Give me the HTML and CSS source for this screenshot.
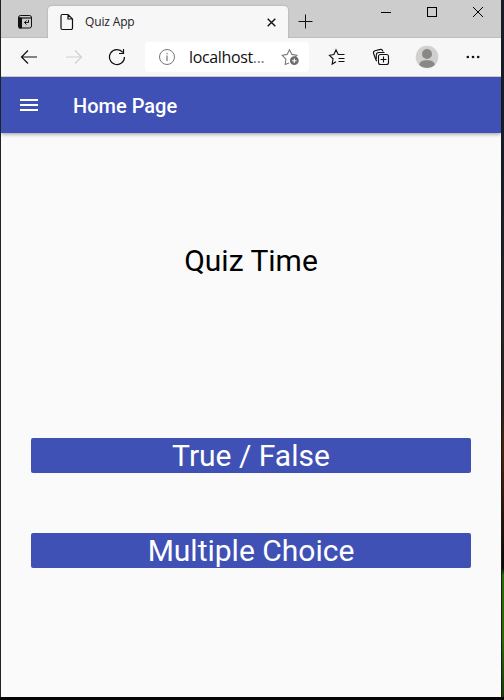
FILE: index.html
```html
<!DOCTYPE html>
<html lang="en">
<head>
<meta charset="utf-8">
<title>Quiz App</title>
<link rel="stylesheet" href="styles.css">
</head>
<body>
<div class="window">
  <header class="titlebar">
    <svg class="tab-actions" width="16" height="16" viewBox="0 0 16 16" fill="none" stroke="#111"><rect x="1.500" y="1.500" width="13" height="12.500" rx="2"/><path d="M1 4h14" stroke-width="1.200"/><path d="M2 4h2.500v10H2z" fill="#111"/><path d="M11.500 6v2.500h-4M9.500 6.500l-2 2 2 2"/></svg>
    <div class="tab">
      <svg class="page-icon" width="14" height="18" viewBox="0 0 14 18" fill="none" stroke="#111" stroke-width="1.200"><path d="M2.500 1.500h5.500l4.500 4.500v9a1.500 1.500 0 0 1-1.500 1.500H2.500A1.500 1.500 0 0 1 1 15V3A1.500 1.500 0 0 1 2.500 1.500zM8 1.500V6h4.500"/></svg>
      <span class="tab-title">Quiz App</span>
      <svg class="tab-close" width="9" height="9" viewBox="0 0 9 9" stroke="#111" stroke-width="1.400"><path d="M.7.7l7.600 7.600M8.300.7L.7 8.300"/></svg>
    </div>
    <svg class="new-tab" width="15" height="15" viewBox="0 0 15 15" stroke="#111" stroke-width="1"><path d="M.5 7.500h14M7.500 .5v14"/></svg>
    <div class="controls">
      <svg width="12" height="12" viewBox="0 0 12 12" stroke="#000"><path d="M1 6.500h10"/></svg>
      <svg width="12" height="12" viewBox="0 0 12 12" stroke="#000" fill="none"><rect x="1.500" y="1.500" width="9" height="9"/></svg>
      <svg width="12" height="12" viewBox="0 0 12 12" stroke="#000"><path d="M1 1l10 10M11 1L1 11"/></svg>
    </div>
  </header>
  <nav class="toolbar">
    <svg class="back" width="18" height="16" viewBox="0 0 18 16" fill="none" stroke="#111" stroke-width="1.200"><path d="M17 8H1.500M8 1.500L1.500 8 8 14.500"/></svg>
    <svg class="forward" width="18" height="16" viewBox="0 0 18 16" fill="none" stroke="#d0d0d0" stroke-width="1.200"><path d="M1 8h15.500M10 1.500L16.500 8 10 14.500"/></svg>
    <svg class="reload" width="18" height="18" viewBox="0 0 18 18" fill="none" stroke="#111" stroke-width="1.200"><path d="M16.500 9A7.500 7.500 0 1 1 14.800 4.300M15.500 1v4.500H11"/></svg>
    <div class="address">
      <svg class="info" width="18" height="18" viewBox="0 0 18 18" fill="none" stroke="#777"><circle cx="9" cy="9" r="7.500"/><path d="M9 7.500v5.500M9 5v1.300" stroke-width="1.200"/></svg>
      <span class="url">localhost<span class="dots">...</span></span>
      <svg class="favorite" width="18" height="18" viewBox="0 0 18 18" fill="none" stroke="#777" stroke-width="1.100"><path d="M8 15l-3.800 1.500.7-5.300L1.200 7.300l4.900-.9L8.500 1.700l2.400 4.700 4.900.9-2 2"/><circle cx="13.300" cy="12.700" r="4.400" fill="#6c6c6c" stroke="none"/><path d="M13.300 10.400v4.600M11 12.700h4.600" stroke="#fff"/></svg>
    </div>
    <svg class="favorites" width="18" height="18" viewBox="0 0 18 18" fill="none" stroke="#111" stroke-width="1.150"><path d="M8 13.700L4.200 16l.8-5.200L1.500 7.300l4.400-.8L8 1.800l2.200 4.700h6.300M10.500 10.500h6M10.500 13.500h6"/></svg>
    <svg class="collections" width="18" height="18" viewBox="0 0 18 18" fill="none" stroke="#111" stroke-width="1.100"><path d="M5 13C4.200 12.700 3.900 12 3.600 11L1.500 5.300C1.200 4 1.700 3.200 3 2.800L8.500 1.400C10 1.100 10.700 2 11 3.500M4.300 11V7Q4.300 4.500 6.800 4.500H12.500"/><rect x="6.500" y="6.500" width="10" height="10" rx="2"/><path d="M11.500 8.500v6M8.500 11.500h6"/></svg>
    <svg class="avatar" width="24" height="24" viewBox="0 0 24 24"><circle cx="12" cy="12" r="11.300" fill="#d2d0ce"/><circle cx="12" cy="9" r="5" fill="#8a8886"/><path d="M4.200 20C4.500 16.500 7.500 15.300 12 15.300s7.500 1.200 7.800 4.700A11.300 11.300 0 0 1 4.200 20z" fill="#8a8886"/></svg>
    <svg class="more" width="14" height="4" viewBox="0 0 14 4" fill="#111"><circle cx="1.800" cy="2" r="1.300"/><circle cx="7" cy="2" r="1.300"/><circle cx="12.200" cy="2" r="1.300"/></svg>
  </nav>
  <div class="appbar">
    <svg class="menu" width="18" height="12" viewBox="0 0 18 12" fill="#fff"><path d="M0 0h18v2H0zM0 5h18v2H0zM0 10h18v2H0z"/></svg>
    <span class="page-title">Home Page</span>
  </div>
  <main class="content">
    <h1 class="heading">Quiz Time</h1>
    <button class="choice">True / False</button>
    <button class="choice">Multiple Choice</button>
  </main>
</div>
</body>
</html>
```
FILE: styles.css
```css
* { box-sizing: border-box; }
body {
  margin: 0;
  width: 504px;
  height: 700px;
  padding: 0 3px 3px 1px;
  overflow: hidden;
  background:
    linear-gradient(#050505, #050505) 0 697px / 504px 3px no-repeat,
    linear-gradient(#222, #222) 0 0 / 1px 697px no-repeat,
    linear-gradient(#191919, #191919) 501px 0 / 1px 700px no-repeat,
    linear-gradient(#171c26 0, #171c26 150px, #272526 330px, #2b211c 410px, #482411 450px, #32180b 500px, #080a07 568px, #237008 575px, #2d6c06 640px, #153c05 697px) 502px 0 / 2px 700px no-repeat;
  font-family: Roboto, sans-serif;
}
svg { display: block; flex: none; }
.window {
  display: flex;
  flex-direction: column;
  width: 500px;
  height: 697px;
  background: #fafafa;
}
.titlebar {
  display: flex;
  flex: none;
  height: 38px;
  background: #cdcdcd;
  box-shadow: inset 0 -1px #bdbdbd;
}
.tab-actions { margin: 14px 0 0 16px; }
.tab {
  display: flex;
  align-items: center;
  width: 240px;
  height: 32px;
  margin: 6px 0 0 15px;
  padding: 0 12px;
  background: #f7f7f7;
  border-radius: 4px 4px 0 0;
  box-shadow: 0 0 2px #999;
  clip-path: inset(-3px -3px 0 -3px);
}
.tab-title {
  margin-left: 11px;
  font: 12px/16px "Open Sans", sans-serif;
  letter-spacing: -.15px;
  color: #222;
}
.tab-close { margin-left: auto; }
.new-tab { margin: 14px 0 0 10px; }
.controls { display: flex; gap: 34px; margin: 6px 0 0 67px; }
.toolbar {
  display: flex;
  align-items: center;
  flex: none;
  height: 39px;
  background: #f7f7f7;
  border-bottom: 1px solid #cbcbcb;
}
.back { margin-left: 19px; }
.forward { margin-left: 27px; }
.reload { margin-left: 25px; }
.address {
  display: flex;
  align-items: center;
  width: 164px;
  height: 30px;
  margin-left: 19px;
  padding: 0 10px 0 13px;
  background: #fff;
  border-radius: 4px;
}
.url {
  margin-left: 13px;
  font: 16px/22px "Open Sans", sans-serif;
  letter-spacing: -.36px;
  color: #111;
}
.dots { color: #777; }
.favorite { margin-left: auto; }
.favorites { margin-left: 19px; }
.collections { margin-left: 26px; }
.avatar { margin-left: 25px; }
.more { margin-left: 27px; }
.appbar {
  display: flex;
  align-items: center;
  flex: none;
  height: 56px;
  padding-left: 19px;
  background: #3f51b5;
  color: #fff;
  box-shadow: 0 1px 4px rgba(0, 0, 0, .4);
  clip-path: inset(0 0 -8px 0);
}
.page-title { margin: 2px 0 0 35px; font-size: 20px; line-height: 24px; font-weight: 500; }
.content {
  display: flex;
  flex-direction: column;
  padding: 110px 30px 0;
}
.heading {
  margin: 0 0 160px;
  font-size: 30px;
  line-height: 35px;
  font-weight: 400;
  text-align: center;
  color: #000;
}
.choice {
  height: 35px;
  margin: 0 0 60px;
  padding: 0;
  border: 0;
  border-radius: 2px;
  background: #3f51b5;
  color: #fff;
  font: 30px/35px Roboto, sans-serif;
}
```
